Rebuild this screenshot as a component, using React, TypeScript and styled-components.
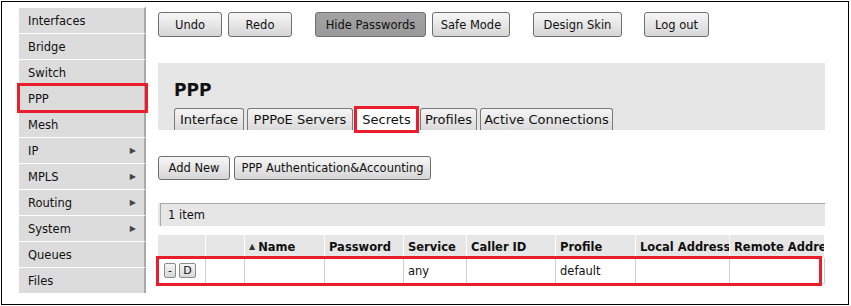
import React from 'react';
import styled, { createGlobalStyle } from 'styled-components';

const GlobalStyle = createGlobalStyle`
  html, body {
    margin: 0;
    padding: 0;
    background: #fff;
  }
  body {
    padding: 1px 0 0 1px;
    font-family: "DejaVu Sans", Verdana, sans-serif;
    font-size: 11.5px;
    color: #111;
  }
`;

const Frame = styled.div`
  width: 848px;
  height: 304px;
  box-sizing: border-box;
  border: 1px solid #000;
  display: flex;
  gap: 12px;
  padding-left: 17px;
  overflow: hidden;
`;

const Sidebar = styled.nav`
  width: 127px;
  margin-top: 5px;
  display: flex;
  flex-direction: column;
  flex-shrink: 0;
`;

const MenuItem = styled.div<{ $active?: boolean }>`
  position: relative;
  height: 26px;
  box-sizing: border-box;
  border-top: 1px solid #fff;
  border-right: 2px solid #a9a9a9;
  background: #dcdcdc;
  display: flex;
  align-items: center;
  justify-content: space-between;
  padding: 0 8px 0 9px;
  ${(p) => p.$active && `outline: 3px solid #ea1d2c; outline-offset: -1px; z-index: 1;`}
`;

const Arrow = styled.span`
  font-size: 8px;
  color: #444;
`;

const Main = styled.main`
  width: 667px;
  flex-shrink: 0;
  display: flex;
  flex-direction: column;
  padding-top: 10px;
`;

const Toolbar = styled.div`
  display: flex;
  align-items: center;
`;

const Button = styled.button<{ $w: number; $gap?: number; $pressed?: boolean; $h?: number }>`
  width: ${(p) => p.$w}px;
  height: ${(p) => p.$h ?? 25}px;
  margin-right: ${(p) => p.$gap ?? 6}px;
  padding: 0;
  box-sizing: border-box;
  border: 1px solid #6f6f6f;
  border-radius: 3px;
  font: inherit;
  color: #111;
  background: ${(p) =>
    p.$pressed
      ? 'linear-gradient(#a3a3a3, #9a9a9a)'
      : 'linear-gradient(#f7f7f7, #e6e6e6 50%, #d6d6d6)'};
  cursor: pointer;
`;

const Panel = styled.section`
  margin-top: 26px;
  background: #e6e6e6;
  height: 67px;
  padding: 0 0 0 16px;
  display: flex;
  flex-direction: column;
  justify-content: flex-end;
`;

const Title = styled.h1`
  margin: 0 0 8px;
  font-size: 17px;
  font-weight: bold;
  line-height: 20px;
`;

const Tabs = styled.div`
  display: flex;
  gap: 3px;
`;

const Tab = styled.div<{ $active?: boolean; $w: number }>`
  position: relative;
  width: ${(p) => p.$w}px;
  height: 22px;
  box-sizing: border-box;
  border: 1px solid #7a7a7a;
  border-bottom: none;
  border-radius: 3px 3px 0 0;
  display: flex;
  align-items: center;
  justify-content: center;
  font-size: 13px;
  background: ${(p) => (p.$active ? '#fff' : 'linear-gradient(#f5f5f5, #dadada)')};
  ${(p) =>
    p.$active &&
    `border-color: transparent;
     &::after {
       content: '';
       position: absolute;
       left: -3px; right: -3px; top: -3px; bottom: -3px;
       border: 3px solid #ea1d2c;
     }`}
`;

const Actions = styled.div`
  display: flex;
  margin-top: 26px;
`;

const ItemBar = styled.div`
  margin-top: 23px;
  height: 23px;
  background: #e6e6e6;
  padding: 0 0 0 2px;
  display: flex;
`;

const ItemBarInner = styled.div`
  flex: 1;
  border-top: 1px solid #a8a8a8;
  border-left: 1px solid #a8a8a8;
  display: flex;
  align-items: center;
  padding-left: 7px;
`;

const Table = styled.div`
  margin-top: 9px;
  display: flex;
  flex-direction: column;
`;

const cols = '48px 39px 80px 79px 63px 89px 80px 94px 95px';

const HeadRow = styled.div`
  display: grid;
  grid-template-columns: ${cols};
  height: 23px;
  background: #e6e6e6;
`;

const HeadCell = styled.div`
  display: flex;
  align-items: center;
  padding-left: 4px;
  font-weight: bold;
  border-right: 1px solid #fff;
  white-space: nowrap;
  overflow: hidden;
`;

const SortMark = styled.span`
  font-size: 8px;
  margin-right: 3px;
  color: #333;
`;

const BodyRow = styled.div`
  position: relative;
  display: grid;
  grid-template-columns: ${cols};
  height: 25px;
  border-bottom: 1px solid #d4d4d4;
  &::after {
    content: '';
    position: absolute;
    left: -2px;
    right: 3px;
    top: -2px;
    bottom: -3px;
    border: 3px solid #ea1d2c;
  }
`;

const Cell = styled.div<{ $pad?: number }>`
  display: flex;
  align-items: center;
  padding-left: ${(p) => p.$pad ?? 4}px;
  border-right: 1px solid #cfcfcf;
  white-space: nowrap;
  overflow: hidden;
  gap: 3px;
`;

const MiniButton = styled.button<{ $w: number }>`
  width: ${(p) => p.$w}px;
  height: 15px;
  padding: 0;
  font: inherit;
  font-size: 11px;
  line-height: 13px;
  border: 1px solid #8a8a8a;
  border-radius: 2px;
  background: linear-gradient(#f5f5f5, #d8d8d8);
  color: #111;
`;

const menu = [
  { label: 'Interfaces' },
  { label: 'Bridge' },
  { label: 'Switch' },
  { label: 'PPP', active: true },
  { label: 'Mesh' },
  { label: 'IP', sub: true },
  { label: 'MPLS', sub: true },
  { label: 'Routing', sub: true },
  { label: 'System', sub: true },
  { label: 'Queues' },
  { label: 'Files' },
];

const tabs = [
  { label: 'Interface', w: 70 },
  { label: 'PPPoE Servers', w: 106 },
  { label: 'Secrets', w: 61, active: true },
  { label: 'Profiles', w: 57 },
  { label: 'Active Connections', w: 133 },
];

const headers = ['', '', 'Name', 'Password', 'Service', 'Caller ID', 'Profile', 'Local Address', 'Remote Address'];

export default function App() {
  return (
    <>
      <GlobalStyle />
      <Frame>
        <Sidebar>
          {menu.map((m) => (
            <MenuItem key={m.label} $active={m.active}>
              {m.label}
              {m.sub && <Arrow>▶</Arrow>}
            </MenuItem>
          ))}
        </Sidebar>
        <Main>
          <Toolbar>
            <Button $w={64}>Undo</Button>
            <Button $w={64} $gap={23}>Redo</Button>
            <Button $w={111} $pressed>Hide Passwords</Button>
            <Button $w={78} $gap={23}>Safe Mode</Button>
            <Button $w={89} $gap={22}>Design Skin</Button>
            <Button $w={65}>Log out</Button>
          </Toolbar>
          <Panel>
            <Title>PPP</Title>
            <Tabs>
              {tabs.map((t) => (
                <Tab key={t.label} $w={t.w} $active={t.active}>
                  {t.label}
                </Tab>
              ))}
            </Tabs>
          </Panel>
          <Actions>
            <Button $w={72} $gap={4} $h={24}>Add New</Button>
            <Button $w={197} $h={24}>PPP Authentication&amp;Accounting</Button>
          </Actions>
          <ItemBar>
            <ItemBarInner>1 item</ItemBarInner>
          </ItemBar>
          <Table>
            <HeadRow>
              {headers.map((h, i) => (
                <HeadCell key={i}>
                  {h === 'Name' && <SortMark>▲</SortMark>}
                  {h}
                </HeadCell>
              ))}
            </HeadRow>
            <BodyRow>
              <Cell $pad={6}>
                <MiniButton $w={12}>-</MiniButton>
                <MiniButton $w={17}>D</MiniButton>
              </Cell>
              <Cell />
              <Cell />
              <Cell />
              <Cell>any</Cell>
              <Cell />
              <Cell>default</Cell>
              <Cell />
              <Cell />
            </BodyRow>
          </Table>
        </Main>
      </Frame>
    </>
  );
}
